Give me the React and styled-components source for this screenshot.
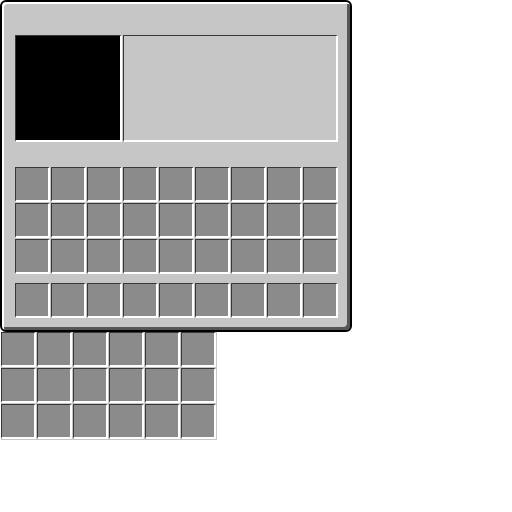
import styled, { createGlobalStyle } from "styled-components"

const Global = createGlobalStyle`
    body {
        margin: 0;
        background: #fff;
        font-family: "Liberation Sans", sans-serif;
    }
`

const Panel = styled.div`
    width: 352px;
    height: 332px;
    box-sizing: border-box;
    border: 2px solid #000;
    border-radius: 6px;
    background: #c6c6c6;
    box-shadow: inset 2px 2px 0 #fff, inset -3px -3px 0 #555;
    padding: 33px 0 0 13px;
`

const Top = styled.div`
    display: flex;
    gap: 1px;
    height: 107px;
`

const Well = styled.div`
    box-sizing: border-box;
    height: 107px;
    width: ${p => p.$w}px;
    background: ${p => p.$dark ? "#000" : "#c6c6c6"};
    border-top: 1px solid #373737;
    border-left: 1px solid #373737;
    border-bottom: 2px solid #fff;
    border-right: 2px solid #fff;
`

const Grid = styled.div`
    display: grid;
    grid-template-columns: repeat(${p => p.$cols}, 36px);
    grid-auto-rows: 36px;
    margin-top: ${p => p.$mt || 0}px;
    width: max-content;
    background: #c6c6c6;
`

const Slot = styled.div`
    box-sizing: border-box;
    margin: 0 1px 1px 0;
    background: #8b8b8b;
    border-top: 1px solid #373737;
    border-left: 1px solid #373737;
    border-bottom: 2px solid #fff;
    border-right: 2px solid #fff;
`

const Extra = styled(Grid)`
    margin-left: 1px;
`

const slots = n => Array.from({ length: n }, (_, i) => <Slot key={i} />)

const App = () => {
  return (
    <>
        <Global />
        <Panel>
            <Top>
                <Well $w={107} $dark />
                <Well $w={215} />
            </Top>
            <Grid $cols={9} $mt={25}>{slots(27)}</Grid>
            <Grid $cols={9} $mt={8}>{slots(9)}</Grid>
        </Panel>
        <Extra $cols={6}>{slots(18)}</Extra>
    </>
  )
}

export default App
